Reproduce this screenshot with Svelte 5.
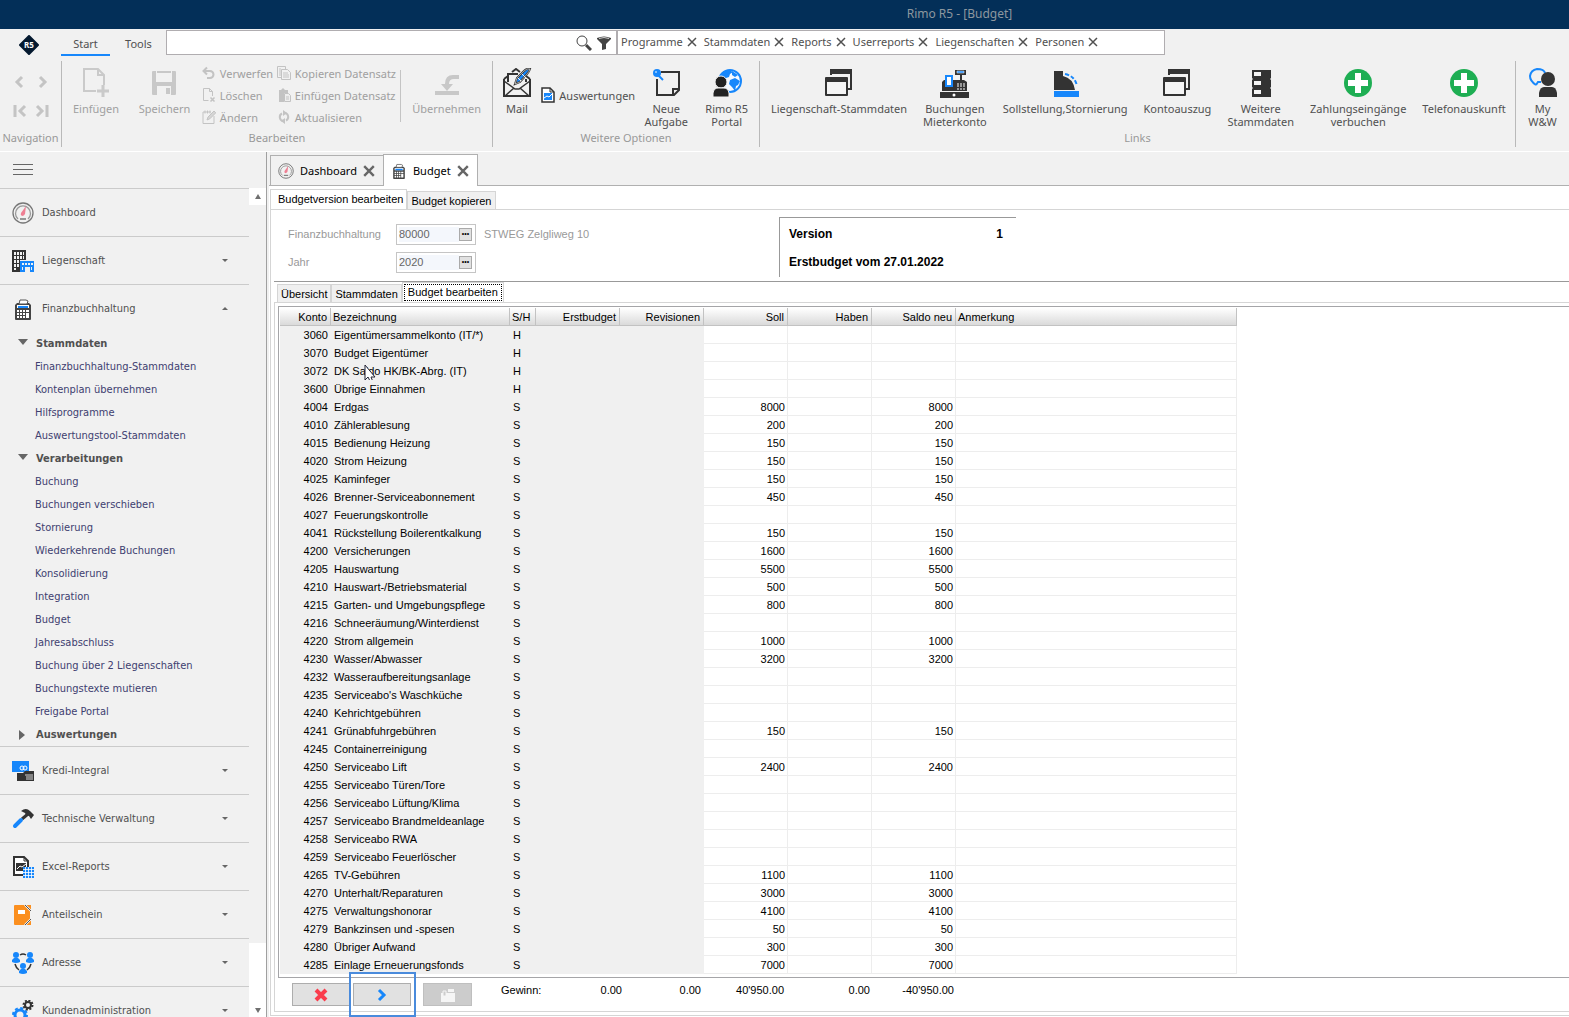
<script lang="ts">
  type Row = [number, string, string, number?];

  const chips = ["Programme", "Stammdaten", "Reports", "Userreports", "Liegenschaften", "Personen"];

  const editLeft = [
    { icon: "undo", label: "Verwerfen" },
    { icon: "delete", label: "Löschen" },
    { icon: "edit", label: "Ändern" },
  ];
  const editRight = [
    { icon: "copy", label: "Kopieren Datensatz" },
    { icon: "paste", label: "Einfügen Datensatz" },
    { icon: "refresh", label: "Aktualisieren" },
  ];

  const links = [
    { icon: "windows", lines: ["Liegenschaft-Stammdaten"] },
    { icon: "register", lines: ["Buchungen", "Mieterkonto"] },
    { icon: "boot", lines: ["Sollstellung,Stornierung"] },
    { icon: "windows", lines: ["Kontoauszug"] },
    { icon: "server", lines: ["Weitere", "Stammdaten"] },
    { icon: "plus", lines: ["Zahlungseingänge", "verbuchen"] },
    { icon: "plus", lines: ["Telefonauskunft"] },
  ];

  const tree = [
    {
      title: "Stammdaten",
      open: true,
      items: [
        "Finanzbuchhaltung-Stammdaten",
        "Kontenplan übernehmen",
        "Hilfsprogramme",
        "Auswertungstool-Stammdaten",
      ],
    },
    {
      title: "Verarbeitungen",
      open: true,
      items: [
        "Buchung",
        "Buchungen verschieben",
        "Stornierung",
        "Wiederkehrende Buchungen",
        "Konsolidierung",
        "Integration",
        "Budget",
        "Jahresabschluss",
        "Buchung über 2 Liegenschaften",
        "Buchungstexte mutieren",
        "Freigabe Portal",
      ],
    },
    { title: "Auswertungen", open: false, items: [] },
  ];

  const modules = [
    { icon: "gauge", label: "Dashboard", arrow: "" },
    { icon: "building", label: "Liegenschaft", arrow: "down" },
    { icon: "calc", label: "Finanzbuchhaltung", arrow: "up" },
    { icon: "cards", label: "Kredi-Integral", arrow: "down" },
    { icon: "hammer", label: "Technische Verwaltung", arrow: "down" },
    { icon: "report", label: "Excel-Reports", arrow: "down" },
    { icon: "folder", label: "Anteilschein", arrow: "down" },
    { icon: "people", label: "Adresse", arrow: "down" },
    { icon: "gears", label: "Kundenadministration", arrow: "down" },
  ];

  const rows: Row[] = [
    [3060, "Eigentümersammelkonto (IT/*)", "H"],
    [3070, "Budget Eigentümer", "H"],
    [3072, "DK Saldo HK/BK-Abrg. (IT)", "H"],
    [3600, "Übrige Einnahmen", "H"],
    [4004, "Erdgas", "S", 8000],
    [4010, "Zählerablesung", "S", 200],
    [4015, "Bedienung Heizung", "S", 150],
    [4020, "Strom Heizung", "S", 150],
    [4025, "Kaminfeger", "S", 150],
    [4026, "Brenner-Serviceabonnement", "S", 450],
    [4027, "Feuerungskontrolle", "S"],
    [4041, "Rückstellung Boilerentkalkung", "S", 150],
    [4200, "Versicherungen", "S", 1600],
    [4205, "Hauswartung", "S", 5500],
    [4210, "Hauswart-/Betriebsmaterial", "S", 500],
    [4215, "Garten- und Umgebungspflege", "S", 800],
    [4216, "Schneeräumung/Winterdienst", "S"],
    [4220, "Strom allgemein", "S", 1000],
    [4230, "Wasser/Abwasser", "S", 3200],
    [4232, "Wasseraufbereitungsanlage", "S"],
    [4235, "Serviceabo's Waschküche", "S"],
    [4240, "Kehrichtgebühren", "S"],
    [4241, "Grünabfuhrgebühren", "S", 150],
    [4245, "Containerreinigung", "S"],
    [4250, "Serviceabo Lift", "S", 2400],
    [4255, "Serviceabo Türen/Tore", "S"],
    [4256, "Serviceabo Lüftung/Klima", "S"],
    [4257, "Serviceabo Brandmeldeanlage", "S"],
    [4258, "Serviceabo RWA", "S"],
    [4259, "Serviceabo Feuerlöscher", "S"],
    [4265, "TV-Gebühren", "S", 1100],
    [4270, "Unterhalt/Reparaturen", "S", 3000],
    [4275, "Verwaltungshonorar", "S", 4100],
    [4279, "Bankzinsen und -spesen", "S", 50],
    [4280, "Übriger Aufwand", "S", 300],
    [4285, "Einlage Erneuerungsfonds", "S", 7000],
  ];

  let search = $state("");
  let ledger = $state("80000");
  let year = $state("2020");
</script>

{#snippet icon(name: string)}
  {#if name === "undo"}
    <svg width="14" height="14" viewBox="0 0 14 14" fill="none" stroke="#c3c3c3" stroke-width="2"><path d="M2 5h6a3 3 0 0 1 0 7H5M5 1.500L1.500 5 5 8.500" /></svg>
  {:else if name === "delete"}
    <svg width="14" height="14" viewBox="0 0 14 14" fill="none" stroke="#c3c3c3"><path d="M6.500 12.500h-5V.5h6l3 3V8M7.500.5v3h3" /><path d="M8.500 9.500l4 4M12.500 9.500l-4 4" stroke-width="1.500" /></svg>
  {:else if name === "edit"}
    <svg width="14" height="14" viewBox="0 0 14 14" fill="none" stroke="#c3c3c3"><path d="M9 2H1v11.500h11V6" /><path d="M3 .5v3M5.500.5v3M8 .5v3" /><path d="M5 10l1-3 6-6 1.800 1.800-6 6z" fill="#d5d5d5" /></svg>
  {:else if name === "copy"}
    <svg width="14" height="14" viewBox="0 0 14 14" fill="none" stroke="#c3c3c3"><path d="M4 11.500H.5V.5h8V3M2 3h2M2 5h2M2 7h2M2 9h2" /><path d="M4.500 3.500h6l3 3v7h-9zM6 7h5M6 9h6M6 11h6" /></svg>
  {:else if name === "paste"}
    <svg width="14" height="14" viewBox="0 0 14 14"><path d="M2 2h2l2-2 2 2h3v3H7v9H2z" fill="#c3c3c3" /><path d="M7.500 5.500h4l2 2v6h-6z" fill="#eee" stroke="#c3c3c3" /><path d="M9 9h3M9 11h3" stroke="#c3c3c3" /></svg>
  {:else if name === "refresh"}
    <svg width="14" height="14" viewBox="0 0 14 14" fill="none" stroke="#c3c3c3" stroke-width="2"><path d="M6 11a4 4 0 0 1-1-7.500M8 3a4 4 0 0 1 1 7.500" /><path d="M6 0l4 3-4 3zM8 8l-4 3 4 3z" fill="#c3c3c3" stroke="none" /></svg>
  {:else if name === "insert"}
    <svg width="30" height="30" viewBox="0 0 30 30" fill="none" stroke="#cacaca" stroke-width="2"><path d="M15 23H3V1h14l6 6v10M17 1v6h6" /><path d="M22 17v12M16 23h12" stroke-width="3" /></svg>
  {:else if name === "save"}
    <svg width="30" height="30" viewBox="0 0 30 30"><path d="M3 4q0-1 1-1h22q1 0 1 1v22q0 1-1 1H4q-1 0-1-1z" fill="#c8c8c8" /><path d="M7 3h16v11H7zM8 18h14v9H8z" fill="#f1f1f1" /><path d="M8 3h14v2H8z" fill="#c8c8c8" /><path d="M17 20h4v6h-4z" fill="#c8c8c8" /></svg>
  {:else if name === "apply"}
    <svg width="30" height="30" viewBox="0 0 30 30"><path d="M3 23h24v4H3z" fill="#c8c8c8" /><path d="M27 7H21Q13 7 13 16H9l6 7 6-7h-4q0-5 5-5h5z" fill="#c8c8c8" /></svg>
  {:else if name === "mail"}
    <svg width="30" height="30" viewBox="0 0 30 30" fill="none" stroke="#333" stroke-width="2"><path d="M2 11l4-3M28 11l-4-3M10 4l4-3 4 3M2 11v17h26V11M6 14V6h10M24 14v-3" /><path d="M2 13l11 8h4l11-8M3 28l9-8M27 28l-9-8" stroke-width="1.500" /><path d="M13 16l2-6 7-7q3-3 6-2-1 3-3 5l-7 8z" fill="#1787fb" /><path d="M13 16l2-6 7-7q3-3 6-2-1 3-3 5l-7 8z" stroke="#f1f1f1" stroke-width=".6" /><path d="M20 6l4 4M16 10l3 3" stroke="#f1f1f1" stroke-width="1" /></svg>
  {:else if name === "evaluation"}
    <svg width="14" height="16" viewBox="0 0 14 16"><path d="M1 1h8l4 4v10H1z" fill="#fff" stroke="#333" stroke-width="1.500" /><path d="M9 1v4h4" fill="none" stroke="#333" /><path d="M3 6h8v7H3z" fill="#1787fb" /><path d="M3 11l3-2 2 1 3-3" fill="none" stroke="#fff" /></svg>
  {:else if name === "task"}
    <svg width="30" height="30" viewBox="0 0 30 30"><path d="M10 4h18v18l-5 5H6V11" fill="none" stroke="#333" stroke-width="2" /><path d="M22 27v-6h6" fill="none" stroke="#333" stroke-width="2" /><path d="M7 7l5 5" stroke="#1787fb" stroke-width="2" /><circle cx="6" cy="5" r="4" fill="#1787fb" /><circle cx="5" cy="4" r="1" fill="#a9d3ff" /></svg>
  {:else if name === "portal"}
    <svg width="30" height="30" viewBox="0 0 30 30"><circle cx="18" cy="13" r="11" fill="#f5f9ff" stroke="#1787fb" stroke-width="2" /><path d="M8 7l4-4 5-1 4 2-3 2-1 3-3 1-1 3-3-2zM18 12l5-2 5 3-2 4-2 1-1 5-3-4-3-3zM20 3l6 4-3 2-3-2z" fill="#1787fb" /><circle cx="9" cy="14" r="6" fill="#222" stroke="#f1f1f1" /><path d="M1 29v-4q1-5 5-5h6q4 0 5 5v4z" fill="#222" stroke="#f1f1f1" /></svg>
  {:else if name === "windows"}
    <svg width="30" height="30" viewBox="0 0 30 30"><path d="M6 1h22v5H6z" fill="#333" /><path d="M27 3v18h-3M7 2v5" fill="none" stroke="#333" stroke-width="2" /><path d="M2 10h21v17H2z" fill="#f5f5f5" stroke="#333" stroke-width="2" stroke-linejoin="round" /><path d="M2 9h21v5H2z" fill="#333" /></svg>
  {:else if name === "register"}
    <svg width="30" height="30" viewBox="0 0 30 30"><path d="M2 14l2-2h20l3 2v9H2zM0 24h29v6H0z" fill="#333" /><path d="M15 2h11v5H15zM20 7h2v5h-2z" fill="#333" /><path d="M17 3h7v2h-7z" fill="#1787fb" stroke="#fff" stroke-width=".5" /><path d="M6 8h6v10H6z" fill="#fff" stroke="#1787fb" stroke-width="2" /><path d="M17 16h2M20 16h2M23 16h2M17 18h2M20 18h2M23 18h2M17 21h2M20 21h2M23 21h2" stroke="#fff" /><circle cx="14" cy="27" r="1.500" fill="#fff" /></svg>
  {:else if name === "boot"}
    <svg width="30" height="30" viewBox="0 0 30 30"><path d="M4 3h9v5q10 2 12 14H4z" fill="#333" /><path d="M4 23h25v6H4z" fill="#1787fb" /><path d="M15 6q10 2 12 12" fill="none" stroke="#1787fb" stroke-width="2" stroke-dasharray="4 2" /></svg>
  {:else if name === "server"}
    <svg width="30" height="30" viewBox="0 0 30 30"><path d="M6 2h19v8l-1 1 1 1v7l-1 1 1 1v8H6v-8l1-1-1-1v-7l1-1-1-1z" fill="#333" /><path d="M8 4h7v4H8zM8 13h7v4H8zM8 22h7v4H8z" fill="#f5f5f5" /></svg>
  {:else if name === "plus"}
    <svg width="30" height="30" viewBox="0 0 30 30"><circle cx="15" cy="15" r="14" fill="#1eae53" /><path d="M15 5v20M5 15h20" stroke="#fff" stroke-width="6" /></svg>
  {:else if name === "contact"}
    <svg width="30" height="30" viewBox="0 0 30 30"><path d="M8 17q-6-4-6-9 1-6 7-7 7 0 8 4M8 17l2-3h3" fill="none" stroke="#1787fb" stroke-width="2" /><circle cx="20" cy="11" r="7" fill="#333" /><path d="M11 29v-4q1-6 5-6h8q4 0 5 6v4z" fill="#333" /></svg>
  {:else if name === "gauge"}
    <svg width="22" height="22" viewBox="0 0 22 22" fill="none"><circle cx="11" cy="11" r="10" stroke="#777" stroke-width="1.300" /><path d="M6 17a7.500 7.500 0 1 1 10 0" stroke="#999" stroke-width="1.300" /><path d="M8 17h6" stroke="#777" stroke-width="1.500" /><path d="M9 11l5-7-1 8q-1 2-3 2-2-1-1-3z" fill="#ee7f93" /></svg>
  {:else if name === "building"}
    <svg width="22" height="22" viewBox="0 0 22 22"><path d="M0 0h14v10H8v12H0z" fill="#333" /><path d="M2 2h2v3H2zM5 2h2v3H5zM8 2h2v3H8zM11 2h1v3h-1zM2 6h2v3H2zM5 6h2v3H5zM8 6h2v3H8zM11 6h1v3h-1zM2 10h2v3H2zM5 10h2v3H5zM2 14h2v3H2zM5 14h2v3H5zM2 18h2v2H2z" fill="#f1f1f1" /><path d="M8 11h14v11h-4v-5h-5v5H8z" fill="#1787fb" /><path d="M10 13h2v2h-2zM13 13h2v2h-2zM16 13h2v2h-2zM19 13h2v2h-2zM10 17h1v3h-1zM19 17h1v3h-1z" fill="#f1f1f1" /></svg>
  {:else if name === "calc"}
    <svg width="22" height="22" viewBox="0 0 22 22"><path d="M3 7l2-2h12l2 2v14q0 1-1 1H4q-1 0-1-1z" fill="#444" /><path d="M7 6l1-4h6l2 1-1 3z" fill="#fff" stroke="#555" /><path d="M5 7h12v3H5z" fill="#fff" /><path d="M6 8h10v2H6z" fill="#1787fb" /><path d="M5 12h2v2H5zM8 12h2v2H8zM11 12h2v2h-2zM14 12h3v2h-3zM5 15h2v2H5zM8 15h2v2H8zM11 15h2v2h-2zM14 15h3v5h-3zM5 18h2v2H5zM8 18h2v2H8zM11 18h2v2h-2z" fill="#fff" /></svg>
  {:else if name === "cards"}
    <svg width="22" height="22" viewBox="0 0 22 22"><path d="M0 1h17v11H0z" fill="#1787fb" /><circle cx="10" cy="8" r="2" fill="none" stroke="#fff" /><circle cx="13" cy="8" r="2" fill="none" stroke="#fff" /><path d="M5 13h6l2-2h9v10H5z" fill="#333" /><path d="M13 15h8M14 17h7M14 19h7" stroke="#fff" stroke-width=".8" /></svg>
  {:else if name === "hammer"}
    <svg width="22" height="22" viewBox="0 0 22 22" fill="none"><path d="M10 11l6-5" stroke="#333" stroke-width="3" /><path d="M9 3q5-4 9 0l2 2 2 2-3 4-2-3-3-1-1-2z" fill="#333" /><path d="M3 18l6-6" stroke="#1787fb" stroke-width="4" stroke-linecap="round" /></svg>
  {:else if name === "report"}
    <svg width="22" height="22" viewBox="0 0 22 22"><path d="M2 1h10l4 4v14H2z" fill="#fff" stroke="#333" stroke-width="2" /><path d="M12 1v4h4" fill="none" stroke="#333" /><path d="M4 7h10v8H4z" fill="#333" /><path d="M5 13l3-3 2 1 4-3" fill="none" stroke="#fff" /><path d="M11 11h11v11H11z" fill="#1787fb" /><path d="M11 13.500h11M11 16.500h11M11 19.500h11M13.500 11v11M16.500 11v11M19.500 11v11" stroke="#fff" stroke-width=".8" /></svg>
  {:else if name === "folder"}
    <svg width="22" height="22" viewBox="0 0 22 22"><path d="M2 2q0-1 1-1h9l6 6v8l-6 6H3q-1 0-1-1z" fill="#fb8f1f" /><path d="M14 1h5v5zM14 21h5v-5z" fill="#fb8f1f" /><path d="M13 1l6 6M13 21l6-6" stroke="#eee" stroke-width="2" /><path d="M13 1l6 6M13 21l6-6" stroke="#555" /><path d="M6 6h7v4H6z" fill="#fff" /></svg>
  {:else if name === "people"}
    <svg width="22" height="22" viewBox="0 0 22 22"><path d="M8 3q3-2 6 0M3 12q1 4 4 6M19 12q-1 4-4 6" fill="none" stroke="#333" stroke-width="1.500" /><g fill="#1787fb"><circle cx="4" cy="3" r="3" /><path d="M0 10V8l2-2h4l2 2v2q-4 2-8 0z" /><circle cx="18" cy="3" r="3" /><path d="M14 10V8l2-2h4l2 2v2q-4 2-8 0z" /><circle cx="11" cy="14" r="3" /><path d="M7 21v-2l2-2h4l2 2v2q-4 2-8 0z" /></g></svg>
  {:else if name === "gears"}
    <svg width="22" height="22" viewBox="0 0 22 22" fill="none"><circle cx="8" cy="15" r="5" stroke="#1787fb" stroke-width="3" /><circle cx="8" cy="15" r="7" stroke="#1787fb" stroke-width="2" stroke-dasharray="3 2.500" /><circle cx="16" cy="5" r="3" stroke="#333" stroke-width="2" /><circle cx="16" cy="5" r="4.500" stroke="#333" stroke-width="2" stroke-dasharray="2 1.500" /></svg>
  {/if}
{/snippet}

{#snippet bigButton(name: string, lines: string[], disabled = false)}
  <button class="big" {disabled}>
    {@render icon(name)}
    <span class="caption">{#each lines as line}<span>{line}</span>{/each}</span>
  </button>
{/snippet}

{#snippet cross()}
  <svg width="10" height="10" viewBox="0 0 10 10" stroke="currentColor" stroke-width="1.500"><path d="M1 1l8 8M9 1l-8 8" /></svg>
{/snippet}

<div class="app">
  <header class="titlebar">Rimo R5 - [Budget]</header>

  <div class="menubar">
    <div class="logo">
      <svg width="20" height="20" viewBox="0 0 20 20"><path d="M10 1l9 9-9 9-9-9z" fill="#051a30" stroke="#051a30" stroke-linejoin="round" stroke-width="2" /><text x="10" y="13" text-anchor="middle">R5</text></svg>
    </div>
    <nav class="menu">
      <button class="active">Start</button>
      <button>Tools</button>
    </nav>
    <div class="searchbox">
      <input type="text" aria-label="Suche" bind:value={search} />
      <button aria-label="Suchen">
        <svg width="16" height="16" viewBox="0 0 16 16" fill="none" stroke="#444"><circle cx="6" cy="6" r="5" /><path d="M10 10l5 5" stroke-width="3" /></svg>
      </button>
      <button aria-label="Filter">
        <svg width="16" height="16" viewBox="0 0 16 16"><path d="M1 3q7-3 14 0v1l-5 5v5l-4 1V9L1 4z" fill="#444" /><path d="M3 3.500q5-2 10 0" stroke="#ccc" fill="none" /></svg>
      </button>
      <div class="chips">
        {#each chips as chip}
          <span class="chip">{chip}<button aria-label="{chip} entfernen">{@render cross()}</button></span>
        {/each}
      </div>
    </div>
  </div>

  <div class="ribbon">
    <section class="group navigation">
      <div class="tools arrows">
        <button disabled aria-label="Zurück"><svg width="14" height="14" viewBox="0 0 14 14"><path d="M9 2L4 7l5 5" /></svg></button>
        <button disabled aria-label="Weiter"><svg width="14" height="14" viewBox="0 0 14 14"><path d="M5 2l5 5-5 5" /></svg></button>
        <button disabled aria-label="Erster"><svg width="14" height="14" viewBox="0 0 14 14"><path d="M12 2L7 7l5 5M2 1v12" /></svg></button>
        <button disabled aria-label="Letzter"><svg width="14" height="14" viewBox="0 0 14 14"><path d="M2 2l5 5-5 5M12 1v12" /></svg></button>
      </div>
      <h2>Navigation</h2>
    </section>
    <section class="group edit">
      <div class="tools">
        {@render bigButton("insert", ["Einfügen"], true)}
        {@render bigButton("save", ["Speichern"], true)}
        {#each [editLeft, editRight] as column}
          <div class="stack">
            {#each column as item}
              <button class="small" disabled>{@render icon(item.icon)}{item.label}</button>
            {/each}
          </div>
        {/each}
        <span class="rule"></span>
        {@render bigButton("apply", ["Übernehmen"], true)}
      </div>
      <h2>Bearbeiten</h2>
    </section>
    <section class="group options">
      <div class="tools">
        {@render bigButton("mail", ["Mail"])}
        <button class="small lone">{@render icon("evaluation")}Auswertungen</button>
        {@render bigButton("task", ["Neue", "Aufgabe"])}
        {@render bigButton("portal", ["Rimo R5", "Portal"])}
      </div>
      <h2>Weitere Optionen</h2>
    </section>
    <section class="group links">
      <div class="tools">
        {#each links as link}
          {@render bigButton(link.icon, link.lines)}
        {/each}
      </div>
      <h2>Links</h2>
    </section>
    <section class="group last">
      <div class="tools">{@render bigButton("contact", ["My", "W&W"])}</div>
    </section>
  </div>

  <div class="body">
    <aside class="sidebar">
      <button class="burger" aria-label="Menü"><span></span><span></span><span></span></button>
      <div class="scroller">
        <nav class="modules">
          {#each modules as mod}
            <button class="module">
              {@render icon(mod.icon)}
              <span class="name">{mod.label}</span>
              {#if mod.arrow}<span class="arrow {mod.arrow}"></span>{/if}
            </button>
            {#if mod.arrow === "up"}
              <div class="tree">
                {#each tree as branch}
                  <button class="branch"><span class="twist" class:open={branch.open}></span>{branch.title}</button>
                  {#each branch.items as item}
                    <a href="#{item}">{item}</a>
                  {/each}
                {/each}
              </div>
            {/if}
          {/each}
        </nav>
        <div class="scrollbar">
          <span class="cap"><span class="tri up"></span></span>
          <span class="thumb"></span>
          <span class="cap end"><span class="tri down"></span></span>
        </div>
      </div>
    </aside>

    <main>
      <div class="doctabs">
        <div class="doctab">
          <span class="mini">{@render icon("gauge")}</span>Dashboard
          <button aria-label="Dashboard schliessen">{@render cross()}</button>
        </div>
        <div class="doctab active">
          <span class="mini">{@render icon("calc")}</span>Budget
          <button aria-label="Budget schliessen">{@render cross()}</button>
        </div>
      </div>

      <div class="document">
        <div class="tabs">
          <button class="active">Budgetversion bearbeiten</button>
          <button>Budget kopieren</button>
        </div>
        <div class="panel">
          <div class="form">
            <div class="fields">
              <label for="ledger">Finanzbuchhaltung</label>
              <span class="lookup"><input id="ledger" bind:value={ledger} /><button aria-label="Finanzbuchhaltung wählen">•••</button></span>
              <span>STWEG Zelgliweg 10</span>
              <label for="year">Jahr</label>
              <span class="lookup"><input id="year" bind:value={year} /><button aria-label="Jahr wählen">•••</button></span>
            </div>
            <div class="version">
              <div><span>Version</span><span>1</span></div>
              <div>Erstbudget vom 27.01.2022</div>
            </div>
          </div>

          <div class="tabs inner">
            <button>Übersicht</button>
            <button>Stammdaten</button>
            <button class="active focus">Budget bearbeiten</button>
          </div>
          <div class="panel inner">
            <div class="grid">
              <table>
                <colgroup>
                  <col class="c-konto" /><col class="c-name" /><col class="c-sh" />
                  <col class="c-num" /><col class="c-num" /><col class="c-num" /><col class="c-num" /><col class="c-num" />
                  <col />
                </colgroup>
                <thead>
                  <tr>
                    <th class="num">Konto</th>
                    <th>Bezeichnung</th>
                    <th>S/H</th>
                    <th class="num">Erstbudget</th>
                    <th class="num">Revisionen</th>
                    <th class="num">Soll</th>
                    <th class="num">Haben</th>
                    <th class="num">Saldo neu</th>
                    <th>Anmerkung</th>
                  </tr>
                </thead>
                <tbody>
                  {#each rows as [konto, name, sh, amount]}
                    <tr>
                      <td class="locked num">{konto}</td>
                      <td class="locked name">
                        {name}
                        {#if konto === 3072}
                          <svg class="pointer" width="12" height="20" viewBox="0 0 12 20"><path d="M1 1v15l3-3 3 6 2-1-2-5h4z" fill="#fff" stroke="#223" /></svg>
                        {/if}
                      </td>
                      <td class="locked">{sh}</td>
                      <td class="locked"></td>
                      <td class="locked"></td>
                      <td class="num">{amount ?? ""}</td>
                      <td></td>
                      <td class="num">{amount ?? ""}</td>
                      <td></td>
                    </tr>
                  {/each}
                </tbody>
              </table>
            </div>

            <footer>
              <div class="actions">
                <button class="cancel" aria-label="Abbrechen"><svg width="14" height="14" viewBox="0 0 14 14"><path d="M2 2l10 10M12 2L2 12" stroke="#fa3c4c" stroke-width="4" /></svg></button>
                <span class="highlight"><button aria-label="Weiter"><svg width="14" height="14" viewBox="0 0 14 14"><path d="M4 2l5 5-5 5" fill="none" stroke="#1787fb" stroke-width="3" /></svg></button></span>
                <button class="post" disabled aria-label="Verbuchen"><svg width="16" height="14" viewBox="0 0 16 14"><path d="M1 5h14v9H1zM8 1h6v3H8z" fill="#f5f5f5" /><path d="M3 3h3v5H3z" fill="#ccc" stroke="#f5f5f5" /></svg></button>
              </div>
              <div class="sums">
                <span>Gewinn:</span>
                <span>0.00</span>
                <span>0.00</span>
                <span>40'950.00</span>
                <span>0.00</span>
                <span>-40'950.00</span>
              </div>
            </footer>
          </div>
        </div>
      </div>
    </main>
  </div>
</div>

<style>
  :global(body) {
    background: #f1f1f1;
  }
  .app {
    height: 100vh;
    display: flex;
    flex-direction: column;
    overflow: hidden;
    color: #505050;
    font: 11px/13px "Noto Sans", sans-serif;
  }
  .app * {
    box-sizing: border-box;
  }
  button,
  input {
    margin: 0;
    padding: 0;
    border: 0;
    background: none;
    color: inherit;
    font: inherit;
  }
  svg {
    display: block;
    flex: none;
  }

  .titlebar {
    flex: none;
    height: 29px;
    padding-left: 350px;
    background: #032f58;
    color: #8d979f;
    font-size: 12px;
    line-height: 28px;
    text-align: center;
  }

  .menubar {
    flex: none;
    height: 27px;
    display: flex;
  }
  .logo {
    width: 61px;
    display: flex;
    align-items: center;
    justify-content: center;
    padding: 4px 3px 0 0;
  }
  .logo text {
    fill: #fff;
    font: bold 8px "Noto Sans", sans-serif;
  }
  .menu {
    width: 105px;
    display: flex;
    gap: 4px;
  }
  .menu button {
    width: 49px;
    padding-top: 3px;
    border-bottom: 2px solid transparent;
  }
  .menu .active {
    border-color: #1787fb;
  }
  .searchbox {
    flex: 0 1 999px;
    height: 25px;
    margin-top: 1px;
    display: flex;
    align-items: center;
    gap: 4px;
    background: #fff;
    border: 1px solid #b0adb0;
  }
  .searchbox input {
    width: 405px;
    height: 100%;
  }
  .chips {
    flex: 1;
    height: 100%;
    display: flex;
    align-items: center;
    gap: 7px;
    padding: 0 0 2px 3px;
    border-left: 2px solid #b0adb0;
  }
  .chip {
    display: flex;
    align-items: center;
    gap: 4px;
  }

  .ribbon {
    flex: none;
    height: 96px;
    display: flex;
    padding: 5px 0 4px;
    border-bottom: 1px solid #fff;
  }
  .group {
    flex: none;
    display: flex;
    flex-direction: column;
    border-right: 1px solid #b9b9b9;
  }
  .group h2 {
    margin: 0;
    color: #999;
    font-size: 11px;
    font-weight: normal;
    text-align: center;
    white-space: nowrap;
  }
  .tools {
    height: 70px;
    display: flex;
    justify-content: space-between;
  }
  .navigation {
    width: 62px;
  }
  .edit {
    width: 431px;
  }
  .edit .tools {
    padding: 0 3px;
  }
  .options {
    width: 267px;
  }
  .options .tools {
    padding: 0 3px 0 1px;
  }
  .links {
    width: 756px;
  }
  .links .tools {
    padding: 0 4px 0 3px;
  }
  .last {
    flex: 1;
    border: 0;
  }
  .last .tools {
    justify-content: center;
  }
  .arrows {
    display: grid;
    grid-template: 29px 29px / 22px 22px;
    justify-content: center;
    padding-top: 6px;
  }
  .arrows button {
    display: grid;
    place-items: center;
  }
  .arrows path {
    fill: none;
    stroke: #c4c4c4;
    stroke-width: 3;
  }
  .big {
    display: flex;
    flex-direction: column;
    align-items: center;
    gap: 4px;
    padding: 7px 8px 0;
  }
  .caption {
    display: flex;
    flex-direction: column;
    white-space: nowrap;
  }
  button:disabled {
    color: #a0a0a0;
  }
  .stack {
    display: flex;
    flex-direction: column;
    padding-top: 1px;
  }
  .small {
    height: 22px;
    display: flex;
    align-items: center;
    gap: 4px;
    white-space: nowrap;
  }
  .lone {
    margin-top: 23px;
  }
  .rule {
    width: 1px;
    height: 52px;
    margin-top: 9px;
    background: #c4c4c4;
  }

  .body {
    flex: 1;
    min-height: 0;
    display: flex;
  }
  .sidebar {
    flex: none;
    width: 267px;
    display: flex;
    flex-direction: column;
    border-right: 1px solid #a0a0a0;
    font: 11px/23px "DejaVu Sans Condensed", "DejaVu Sans", sans-serif;
  }
  .burger {
    height: 36px;
    display: flex;
    flex-direction: column;
    justify-content: center;
    gap: 4px;
    padding: 0 0 2px 13px;
  }
  .burger span {
    width: 20px;
    height: 1px;
    background: #666;
  }
  .scroller {
    flex: 1;
    min-height: 0;
    display: flex;
  }
  .modules {
    flex: 1;
    overflow: hidden;
  }
  .module {
    width: 100%;
    height: 48px;
    display: flex;
    align-items: center;
    gap: 8px;
    padding: 0 21px 0 12px;
    border-top: 1px solid #cbcbcb;
  }
  .name {
    flex: 1;
    text-align: left;
  }
  .arrow {
    border: 3px solid transparent;
  }
  .arrow.down {
    border-top-color: #666;
    border-bottom: 0;
  }
  .arrow.up {
    border-bottom-color: #666;
    border-top: 0;
  }
  .tree {
    display: flex;
    flex-direction: column;
  }
  .tree a {
    padding-left: 35px;
    color: #404070;
    text-decoration: none;
  }
  .branch {
    display: flex;
    align-items: center;
    font-weight: bold;
  }
  .twist {
    margin: 0 11px 0 19px;
    border: 5px solid transparent;
    border-left: 6px solid #666;
    border-right: 0;
  }
  .twist.open {
    margin: 0 8px 4px 18px;
    border: 5px solid transparent;
    border-top: 6px solid #666;
    border-bottom: 0;
  }
  .scrollbar {
    width: 17px;
    display: flex;
    flex-direction: column;
  }
  .cap {
    height: 17px;
    display: grid;
    place-items: center;
    background: #fff;
  }
  .cap.end {
    height: 74px;
    align-items: end;
    padding-bottom: 4px;
  }
  .thumb {
    flex: 1;
  }
  .tri {
    border: 3px solid transparent;
  }
  .tri.up {
    border-top: 0;
    border-bottom: 5px solid #707070;
  }
  .tri.down {
    border-bottom: 0;
    border-top: 5px solid #707070;
  }

  main {
    flex: 1;
    min-width: 0;
    display: flex;
    flex-direction: column;
    padding-left: 2px;
    color: #000;
  }
  .doctabs {
    flex: none;
    height: 34px;
    display: flex;
    align-items: flex-end;
    padding: 0 0 0 1px;
    border-bottom: 1px solid #b0b0b0;
  }
  .doctab {
    height: 30px;
    display: flex;
    align-items: center;
    gap: 6px;
    padding: 0 8px 0 7px;
    border: 1px solid #b0b0b0;
    border-bottom: 0;
  }
  .doctab.active {
    height: 32px;
    margin: 0 0 -1px -1px;
    background: #fff;
  }
  .doctab button {
    color: #666;
  }
  .doctab button :global(svg) {
    width: 12px;
    height: 12px;
  }
  .doctab button :global(path) {
    stroke-width: 2;
  }
  .mini :global(svg) {
    width: 16px;
    height: 16px;
  }
  .document {
    flex: 1;
    min-height: 0;
    display: flex;
    flex-direction: column;
    padding: 3px 0 1px 1px;
    background: #fff;
    font: 11px/18px "Liberation Sans", sans-serif;
  }
  .tabs {
    display: flex;
    align-items: flex-end;
    margin-bottom: -1px;
  }
  .tabs button {
    height: 19px;
    padding: 0 3px 1px;
    background: #f0f0f0;
    border: 1px solid #d5d5d5;
    white-space: nowrap;
  }
  .tabs .active {
    height: 21px;
    padding: 0 3px 2px 7px;
    background: #fff;
    border-bottom-color: #fff;
  }
  .tabs .focus {
    padding: 0 5px 2px;
    outline: 1px dotted #000;
    outline-offset: -3px;
  }
  .panel {
    flex: 1;
    min-height: 0;
    display: flex;
    flex-direction: column;
    border: 1px solid #d5d5d5;
    border-right: 0;
    padding: 0 0 3px 3px;
  }
  .form {
    display: flex;
    height: 72px;
    border-bottom: 1px solid #999;
  }
  .fields {
    width: 505px;
    display: grid;
    grid-template-columns: 108px 80px 1fr;
    grid-auto-rows: 28px;
    align-items: center;
    padding: 10px 0 0 14px;
    color: #999;
  }
  .fields > span:nth-of-type(2) {
    padding-left: 8px;
  }
  .lookup {
    height: 21px;
    display: flex;
    align-items: center;
    padding: 2px;
    border: 1px solid #c5c5c5;
  }
  .lookup input {
    width: 60px;
    flex: none;
    height: 15px;
    background: #f4f7fc;
    color: #666;
  }
  .lookup button {
    width: 13px;
    height: 13px;
    background: #e1e1e1;
    border: 1px solid #aaa;
    color: #000;
    font-size: 7px;
    line-height: 10px;
  }
  .version {
    width: 237px;
    height: 60px;
    margin-top: 7px;
    padding: 2px 13px 0 9px;
    border-top: 1px solid #999;
    border-left: 1px solid #999;
    font-size: 12px;
    line-height: 28px;
    font-weight: bold;
  }
  .version div {
    display: flex;
    justify-content: space-between;
  }
  .tabs.inner {
    padding: 0 0 0 3px;
  }
  .panel.inner {
    padding: 3px 0 0 3px;
  }
  .grid {
    flex: 1;
    min-height: 0;
    overflow: hidden;
    padding: 1px 0 0 1px;
    border: 1px solid #a5a5a8;
    border-right: 0;
  }
  table {
    width: 957px;
    table-layout: fixed;
    border-collapse: separate;
    border-spacing: 0;
  }
  .c-konto {
    width: 51px;
  }
  .c-name {
    width: 179px;
  }
  .c-sh {
    width: 26px;
  }
  .c-num {
    width: 84px;
  }
  th,
  td {
    height: 18px;
    padding: 2px 2px 0 3px;
    line-height: 15px;
    text-align: left;
    font-weight: normal;
    white-space: nowrap;
    border-right: 1px solid #ededed;
    border-bottom: 1px solid #ededed;
  }
  th {
    padding: 2px 3px 0 2px;
    background: linear-gradient(#fff, #dadada);
    border-color: #c2c2c2;
  }
  .num {
    text-align: right;
  }
  .locked {
    background: #f0f0f0;
    border-color: #f0f0f0;
  }
  .name {
    position: relative;
  }
  .pointer {
    position: absolute;
    left: 33px;
    top: 2px;
  }

  footer {
    flex: none;
    height: 33px;
    display: flex;
  }
  .actions {
    display: flex;
    align-items: center;
    padding-left: 14px;
  }
  .actions button {
    width: 58px;
    height: 23px;
    display: grid;
    place-items: center;
    background: #e1e1e1;
    border: 1px solid #adadad;
  }
  .actions .post {
    width: 49px;
    margin-left: 7px;
    background: #ccc;
    border-color: #bfbfbf;
  }
  .highlight {
    position: relative;
    height: 45px;
    display: flex;
    align-items: center;
    margin-left: -1px;
    padding: 0 3px 0 2px;
    border: 2px solid #4a8bdc;
  }
  .sums {
    display: grid;
    grid-template-columns: 40px 81px 79px 83px 86px 84px;
    padding: 3px 0 0 29px;
    text-align: right;
  }
  .sums span:first-child {
    text-align: left;
  }
</style>
